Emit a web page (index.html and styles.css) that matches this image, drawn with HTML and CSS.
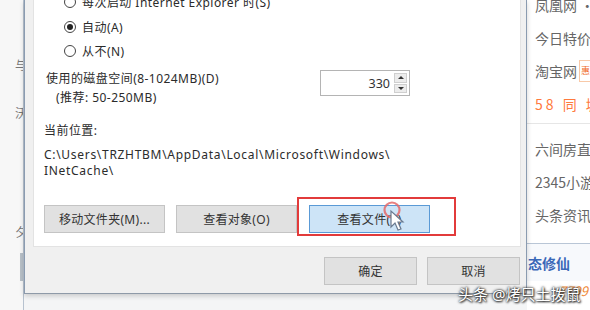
FILE: index.html
```html
<!DOCTYPE html>
<html lang="zh-CN">
<head>
<meta charset="utf-8">
<link rel="stylesheet" href="styles.css">
</head>
<body>
<div class="screen">
  <div class="left">
    <span class="frag f1">与</span>
    <span class="frag f2">沃</span>
    <span class="frag f3">夕</span>
    <span class="lbar"></span>
  </div>
  <div class="dialog">
    <div class="panel">
      <div class="radios">
        <div class="radio"><span class="circle"></span><span>每次启动 Internet Explorer 时(S)</span></div>
        <div class="radio"><span class="circle checked"></span><span>自动(A)</span></div>
        <div class="radio"><span class="circle"></span><span>从不(N)</span></div>
      </div>
      <div class="disk">
        <div class="disk-label">
          <div>使用的磁盘空间(8-1024MB)(D)</div>
          <div class="rec">(推荐: 50-250MB)</div>
        </div>
        <div class="spin">
          <span class="val">330</span>
          <span class="arrows"><span class="arr up"></span><span class="arr down"></span></span>
        </div>
      </div>
      <div class="loc">当前位置:</div>
      <div class="path">C:\Users\TRZHTBM\AppData\Local\Microsoft\Windows\<br>INetCache\</div>
      <div class="btns">
        <div class="btn">移动文件夹(M)...</div>
        <div class="btn">查看对象(O)</div>
        <div class="btn active">查看文件(V)</div>
      </div>
    </div>
    <div class="footer">
      <div class="btn small">确定</div>
      <div class="btn small">取消</div>
    </div>
  </div>
  <div class="right">
    <div class="item first">凤凰网 •</div>
    <div class="item">今日特价</div>
    <div class="item">淘宝网<span class="tag">惠</span></div>
    <div class="item orange">58 同 城</div>
    <div class="sep"></div>
    <div class="item">六间房直</div>
    <div class="item">2345小游</div>
    <div class="item">头条资讯</div>
    <div class="blue-row">态修仙</div>
    <div class="num">7799</div>
  </div>
</div>
<div class="highlight"></div>
<svg class="cursor" width="30" height="36" viewBox="0 0 30 36">
  <circle cx="12" cy="10" r="7.5" fill="none" stroke="#e46a6a" stroke-width="2.2" opacity="0.85"/>
  <path d="M11 11 L11 27 L15 23 L18 30 L21 29 L18 22 L23 22 Z" fill="#fff" stroke="#6a7a90" stroke-width="1.2"/>
</svg>
<div class="watermark">头条 @烤只土拨鼠</div>
</body>
</html>
```

FILE: styles.css
```css
* { box-sizing: border-box; }
html, body { margin: 0; padding: 0; }
body {
  width: 590px;
  height: 310px;
  overflow: hidden;
  position: relative;
  background: #f4f5f6;
  font-family: "Noto Sans", "Noto Sans CJK SC", sans-serif;
  color: #2b2b2b;
  font-size: 12px;
}
.screen {
  display: flex;
  width: 590px;
  height: 310px;
}
.left {
  width: 24px;
  height: 310px;
  position: relative;
  background: #f7f7f7;
  border-right: 1px solid #b7c2cf;
  overflow: hidden;
  flex: none;
}
.frag {
  position: absolute;
  right: -4px;
  font-size: 12px;
  color: #777;
}
.f1 { top: 56px; }
.f2 { top: 104px; }
.f3 { top: 223px; }
.lbar {
  position: absolute;
  right: 0;
  top: 253px;
  width: 3px;
  height: 28px;
  background: #b8c0c8;
}
.dialog {
  width: 503px;
  height: 294px;
  flex: none;
  background: #f0f0f0;
  border-left: 1px solid #8a9bb0;
  border-right: 1px solid #8a9bb0;
  border-bottom: 1px solid #8e9aa8;
  box-shadow: 0 2px 5px rgba(0,0,0,0.18);
  padding: 0 5px 0 8px;
  display: flex;
  flex-direction: column;
  position: relative;
  z-index: 1;
}
.panel {
  height: 247px;
  background: #fff;
  border: 1px solid #e3e3e3;
  border-top: none;
  padding-left: 10px;
  display: flex;
  flex-direction: column;
  overflow: hidden;
  letter-spacing: 0.45px;
}
.radios {
  margin-top: -10px;
  padding-left: 20px;
  display: flex;
  flex-direction: column;
}
.radio {
  height: 24.5px;
  display: flex;
  align-items: center;
  gap: 6px;
  font-size: 12px;
}
.circle {
  width: 12px;
  height: 12px;
  border: 1px solid #444;
  border-radius: 50%;
  display: flex;
  align-items: center;
  justify-content: center;
}
.circle.checked::after {
  content: "";
  width: 6px;
  height: 6px;
  border-radius: 50%;
  background: #222;
}
.disk {
  margin-top: 5px;
  display: flex;
  align-items: flex-start;
}
.disk-label {
  width: 276px;
  line-height: 19px;
  padding-left: 2px;
}
.rec { padding-left: 10px; }
.spin {
  margin-top: 1.5px;
  width: 90px;
  height: 26px;
  border: 1px solid #b4b4b4;
  background: #fff;
  display: flex;
  align-items: center;
  justify-content: flex-end;
  padding: 2px;
}
.val {
  font-size: 12.5px;
  color: #333;
  padding-right: 4px;
  letter-spacing: 0;
}
.arrows {
  display: flex;
  flex-direction: column;
  gap: 1px;
  width: 13px;
  height: 20px;
}
.arr {
  flex: 1;
  background: #ececec;
  border: 1px solid #cfcfcf;
  display: flex;
  align-items: center;
  justify-content: center;
}
.arr::after {
  content: "";
  border-left: 3px solid transparent;
  border-right: 3px solid transparent;
}
.up::after { border-bottom: 3px solid #333; }
.down::after { border-top: 3px solid #333; }
.loc {
  margin-top: 16px;
  line-height: 16px;
}
.path {
  margin-top: 8px;
  line-height: 16px;
  letter-spacing: 0.7px;
}
.btns {
  margin-top: 26px;
  display: flex;
  gap: 11px;
}
.btn {
  width: 121px;
  height: 28px;
  background: #e1e1e1;
  border: 1px solid #c4c4c4;
  display: flex;
  align-items: center;
  justify-content: center;
  font-size: 12px;
  color: #333;
  letter-spacing: 0.3px;
}
.btn.active {
  margin-left: 1px;
  background: #cde4f7;
  border-color: #5a9ad6;
}
.footer {
  flex: 1;
  display: flex;
  justify-content: flex-end;
  align-items: flex-start;
  gap: 10px;
  padding-top: 10px;
  padding-right: 1px;
}
.btn.small {
  width: 93px;
  height: 28px;
}
.right {
  flex: 1;
  height: 310px;
  background: #fff;
  overflow: hidden;
  display: flex;
  flex-direction: column;
  font-family: "Noto Sans CJK SC", sans-serif;
}
.item {
  height: 33px;
  flex: none;
  display: flex;
  align-items: center;
  padding-left: 8px;
  font-size: 14px;
  color: #666;
  white-space: nowrap;
}
.item.first { margin-top: -12px; }
.item.orange { color: #ff7a3d; letter-spacing: 3px; }
.tag {
  margin-left: 2px;
  font-size: 9px;
  color: #f07030;
  border: 1px solid #f8c9a8;
  padding: 0 1px;
  line-height: 20px;
}
.sep {
  height: 1px;
  margin: 3px 0 8px;
  background: #e6e6e6;
  flex: none;
}
.blue-row {
  margin-top: 12px;
  border-top: 1px solid #b9c6d6;
  height: 38px;
  flex: none;
  display: flex;
  align-items: center;
  padding-left: 1px;
  font-size: 14px;
  font-weight: bold;
  color: #3a68b8;
  background: #f7f9fc;
}
.num {
  padding-left: 32px;
  font-size: 13px;
  font-style: italic;
  color: #f08a3a;
}
.highlight {
  position: absolute;
  left: 297px;
  top: 197px;
  width: 159px;
  height: 39px;
  border: 2px solid #e23b3b;
  z-index: 2;
}
.cursor {
  position: absolute;
  left: 380px;
  top: 200px;
  z-index: 3;
}
.watermark {
  position: absolute;
  left: 458px;
  top: 283px;
  font-size: 15px;
  color: #fff;
  text-shadow: 0 0 2px #333, 0 0 3px #333, 1px 1px 2px #222;
  z-index: 4;
  white-space: nowrap;
}
```
